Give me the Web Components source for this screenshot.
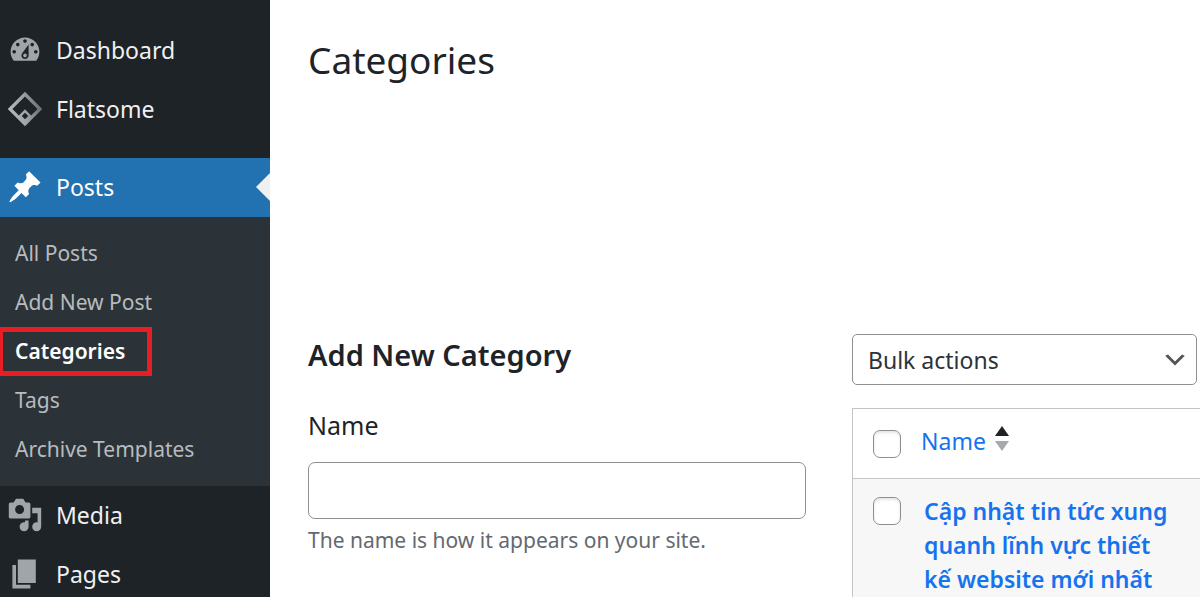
<!DOCTYPE html>
<html lang="en">
<head>
<meta charset="utf-8">
<meta name="viewport" content="width=device-width, initial-scale=1">
<title>Categories</title>
<style>
    html, body {
        height: 100%;
    }
    body {
        margin: 0;
        overflow: hidden;
        background: #fff;
        color: #1d2327;
        font-family: "Noto Sans", "Open Sans", sans-serif;
        font-size: 23px;
        line-height: 34px;
    }
</style>
</head>
<body>
<admin-layout>
    <admin-menu slot="menu">
        <menu-item label="Dashboard" icon="dashboard"></menu-item>
        <menu-item label="Flatsome" icon="flatsome"></menu-item>
        <menu-separator></menu-separator>
        <menu-item label="Posts" icon="post" current></menu-item>
        <sub-menu>
            <sub-item label="All Posts"></sub-item>
            <sub-item label="Add New Post"></sub-item>
            <sub-item label="Categories" current></sub-item>
            <sub-item label="Tags"></sub-item>
            <sub-item label="Archive Templates"></sub-item>
        </sub-menu>
        <menu-item label="Media" icon="media"></menu-item>
        <menu-item label="Pages" icon="page"></menu-item>
    </admin-menu>
    <span slot="title">Categories</span>
    <category-form slot="form"></category-form>
    <category-list slot="list">
        <category-row>Cập nhật tin tức xung quanh lĩnh vực thiết kế website mới nhất</category-row>
    </category-list>
</admin-layout>

<script>
    const icons = {
        dashboard: `<path d="M3.76 16h12.48c1.1-1.37 1.76-3.11 1.76-5 0-4.42-3.58-8-8-8s-8 3.58-8 8c0 1.89.66 3.63 1.76 5zM10 4c.55 0 1 .45 1 1s-.45 1-1 1-1-.45-1-1 .45-1 1-1zM6 6c.55 0 1 .45 1 1s-.45 1-1 1-1-.45-1-1 .45-1 1-1zm8 0c.55 0 1 .45 1 1s-.45 1-1 1-1-.45-1-1 .45-1 1-1zm-5.37 5.55L12 7v6c0 1.1-.9 2-2 2s-2-.9-2-2c0-.57.24-1.08.63-1.45zM4 10c.55 0 1 .45 1 1s-.45 1-1 1-1-.45-1-1 .45-1 1-1zm12 0c.55 0 1 .45 1 1s-.45 1-1 1-1-.45-1-1 .45-1 1-1zm-5 3c0-.55-.45-1-1-1s-1 .45-1 1 .45 1 1 1 1-.45 1-1z"/>`,
        flatsome: `
            <defs>
                <linearGradient id="fade" x1="0" x2="1" y1=".6" y2=".4">
                    <stop offset="0" stop-color="#b9bcbf"/>
                    <stop offset=".5" stop-color="#a0a3a6"/>
                    <stop offset="1" stop-color="#65696d"/>
                </linearGradient>
            </defs>
            <path fill="url(#fade)" fill-rule="evenodd" d="M10 .4L19.6 10 10 19.6.4 10zM10 3L3 10l3.6 3.6L10 10.2l3.4 3.4L17 10zM10 12.1L8.2 13.900 10 15.700l1.800-1.800z"/>`,
        post: `<path d="M10.44 3.02l1.82-1.82 6.36 6.35-1.83 1.82c-1.05-.68-2.48-.57-3.41.36l-.75.75c-.92.93-1.04 2.35-.35 3.41l-1.83 1.82-2.41-2.41-2.8 2.79c-.42.42-3.38 2.71-3.8 2.29s1.86-3.39 2.28-3.81l2.79-2.79L4.1 9.36l1.83-1.82c1.05.69 2.48.57 3.4-.36l.75-.75c.93-.92 1.05-2.35.36-3.41z"/>`,
        media: `<path d="M13 11V4c0-.55-.45-1-1-1h-1.67L9 1H5L3.67 3H2c-.55 0-1 .45-1 1v7c0 .55.45 1 1 1h10c.55 0 1-.45 1-1zM7 4.5c1.38 0 2.5 1.12 2.5 2.5S8.38 9.5 7 9.5 4.5 8.38 4.5 7 5.62 4.5 7 4.5zM14 6h5v10.5c0 1.38-1.12 2.5-2.5 2.5S14 17.88 14 16.5s1.12-2.5 2.5-2.5c.17 0 .34.02.5.05V9h-3V6zm-4 8.05V13h2v3.5c0 1.38-1.12 2.5-2.5 2.5S7 17.88 7 16.5 8.12 14 9.5 14c.17 0 .34.02.5.05z"/>`,
        page: `<path d="M6 15V2h10v13H6zm-1 1h8v2H3V5h2v11z"/>`
    }

    class BaseElement extends HTMLElement {
        constructor() {
            super()
            this.attachShadow({ mode: "open" })
        }
        connectedCallback() {
            const template = document.createElement("template")
            template.innerHTML = `${this.getStyles()}${this.getTemplate()}`
            this.shadowRoot.replaceChildren(template.content.cloneNode(true))
        }
    }

    class AdminLayout extends BaseElement {
        getTemplate() {
            return `
            <slot name="menu"></slot>
            <main>
                <h1><slot name="title"></slot></h1>
                <div class="columns">
                    <slot name="form"></slot>
                    <slot name="list"></slot>
                </div>
            </main>
            `
        }
        getStyles() {
            return `
            <style>
            :host {
                display: grid;
                grid-template-columns: 270px minmax(0, 1fr);
                min-height: 100%;
            }
            main {
                padding: 35px 0 0 38px;
            }
            h1 {
                margin: 0;
                font-size: 37px;
                font-weight: 400;
                line-height: 50px;
            }
            .columns {
                display: grid;
                grid-template-columns: minmax(0, 498fr) minmax(0, 348fr);
                gap: 46px;
                margin-top: 249px;
            }
            </style>
            `
        }
    }

    class AdminMenu extends BaseElement {
        getTemplate() {
            return `<nav aria-label="Main menu"><slot></slot></nav>`
        }
        getStyles() {
            return `
            <style>
            :host {
                display: block;
                background: #1d2327;
                color: #f0f0f1;
            }
            nav {
                display: flex;
                flex-direction: column;
                padding-top: 21px;
            }
            </style>
            `
        }
    }

    class MenuItem extends BaseElement {
        getTemplate() {
            return `
            <a href="#">
                <svg viewBox="0 0 20 20" aria-hidden="true">${icons[this.getAttribute("icon")]}</svg>
                <span>${this.getAttribute("label")}</span>
            </a>
            `
        }
        getStyles() {
            return `
            <style>
            :host {
                display: block;
            }
            a {
                display: flex;
                align-items: center;
                gap: 13px;
                box-sizing: border-box;
                height: 59px;
                padding: 0 0 2px 7px;
                color: inherit;
                text-decoration: none;
            }
            svg {
                width: 36px;
                height: 36px;
                fill: #a0a5aa;
            }
            :host([current]) a {
                background: #2271b1;
                color: #fff;
            }
            :host([current]) svg {
                fill: #fff;
            }
            /* arrow that points at the open page */
            :host([current]) a::after {
                content: "";
                margin-left: auto;
                border: 14px solid transparent;
                border-left: 0;
                border-right-color: #f0f0f1;
            }
            </style>
            `
        }
    }

    class MenuSeparator extends BaseElement {
        getTemplate() {
            return ""
        }
        getStyles() {
            return `<style>:host { display: block; height: 19px; }</style>`
        }
    }

    class SubMenu extends BaseElement {
        getTemplate() {
            return `<slot></slot>`
        }
        getStyles() {
            return `
            <style>
            :host {
                display: flex;
                flex-direction: column;
                align-items: flex-start;
                padding: 12px 0;
                background: #2c3338;
                font-size: 21px;
            }
            </style>
            `
        }
    }

    class SubItem extends BaseElement {
        getTemplate() {
            return `<a href="#">${this.getAttribute("label")}</a>`
        }
        getStyles() {
            return `
            <style>
            :host {
                display: block;
            }
            a {
                display: flex;
                align-items: center;
                box-sizing: border-box;
                height: 49px;
                padding: 0 15px 1px;
                color: #b8bbbf;
                text-decoration: none;
            }
            :host([current]) a {
                padding: 0 22px 1px 12px;
                border: 5px solid #e81e25;
                border-left-width: 3px;
                color: #fff;
                font-weight: 600;
            }
            </style>
            `
        }
    }

    class CategoryForm extends BaseElement {
        getTemplate() {
            return `
            <form>
                <h2>Add New Category</h2>
                <label for="tag-name">Name</label>
                <input id="tag-name" type="text" aria-describedby="name-help">
                <p id="name-help">The name is how it appears on your site.</p>
            </form>
            `
        }
        getStyles() {
            return `
            <style>
            :host {
                display: block;
            }
            form {
                display: flex;
                flex-direction: column;
            }
            h2 {
                margin: 4px 0 36px;
                font-size: 29px;
                font-weight: 600;
                line-height: 34px;
            }
            label {
                font-size: 25px;
            }
            input {
                box-sizing: border-box;
                width: 100%;
                height: 57px;
                margin: 20px 0 4px;
                padding: 0 14px;
                border: 1px solid #8c8f94;
                border-radius: 7px;
                background: #fff;
                font: inherit;
            }
            p {
                margin: 0;
                color: #646970;
                font-size: 21px;
            }
            </style>
            `
        }
    }

    class CategoryList extends BaseElement {
        getTemplate() {
            const rows = [...this.querySelectorAll("category-row")]
            return `
            <div class="actions">
                <select aria-label="Bulk actions">
                    <option>Bulk actions</option>
                </select>
                <svg viewBox="0 0 20 20" aria-hidden="true"><path d="M5 6l5 5 5-5 2 1-7 7-7-7 2-1z"/></svg>
            </div>
            <table>
                <thead>
                    <tr>
                        <td class="check"><input type="checkbox" aria-label="Select all"></td>
                        <th scope="col">
                            <a href="#">Name
                                <svg viewBox="0 0 14 26" aria-hidden="true">
                                    <path fill="#1d2327" d="M7 0l7 10H0z"/>
                                    <path fill="#a7aaad" d="M0 15h14L7 25z"/>
                                </svg>
                            </a>
                        </th>
                    </tr>
                </thead>
                <tbody>
                    ${rows.map((row, i) => `
                    <tr>
                        <td class="check"><input type="checkbox" aria-labelledby="row-${i}"></td>
                        <td class="name"><a href="#" id="row-${i}">${row.textContent}</a></td>
                    </tr>`).join("")}
                </tbody>
            </table>
            `
        }
        getStyles() {
            return `
            <style>
            :host {
                display: block;
            }
            .actions {
                display: grid;
                align-items: center;
                margin: 0 3px 23px 0;
            }
            .actions > * {
                grid-area: 1 / 1;
            }
            select {
                appearance: none;
                box-sizing: border-box;
                width: 100%;
                height: 51px;
                padding: 0 48px 0 15px;
                border: 1px solid #8c8f94;
                border-radius: 5px;
                background: #fff;
                color: #2c3338;
                font: inherit;
            }
            .actions svg {
                justify-self: end;
                width: 28px;
                height: 28px;
                margin-right: 8px;
                fill: #555;
                pointer-events: none;
            }
            table {
                width: 100%;
                border: 1px solid #c3c4c7;
                border-width: 1px 0 0 1px;
                border-spacing: 0;
            }
            td, th {
                padding: 0;
                text-align: left;
                vertical-align: top;
            }
            thead td, thead th {
                border-bottom: 1px solid #c3c4c7;
                font-weight: 400;
            }
            tbody tr {
                background: #f7f7f7;
            }
            .check {
                width: 68px;
                line-height: 0;
            }
            input {
                appearance: none;
                box-sizing: border-box;
                width: 28px;
                height: 28px;
                margin: 18px 20px;
                border: 1px solid #8c8f94;
                border-radius: 7px;
                background: #fff;
                box-shadow: inset 0 2px 3px rgba(0, 0, 0, .1);
            }
            thead input {
                margin-top: 21px;
            }
            a {
                color: #1673ee;
                text-decoration: none;
            }
            th a {
                display: flex;
                gap: 9px;
                padding: 15px 0 20px;
            }
            th svg {
                width: 14px;
                height: 26px;
                margin-top: 2px;
            }
            .name {
                padding: 15px 32px 15px 3px;
                font-weight: 600;
            }
            </style>
            `
        }
    }

    customElements.define("admin-layout", AdminLayout)
    customElements.define("admin-menu", AdminMenu)
    customElements.define("menu-item", MenuItem)
    customElements.define("menu-separator", MenuSeparator)
    customElements.define("sub-menu", SubMenu)
    customElements.define("sub-item", SubItem)
    customElements.define("category-form", CategoryForm)
    customElements.define("category-list", CategoryList)
</script>
</body>
</html>
